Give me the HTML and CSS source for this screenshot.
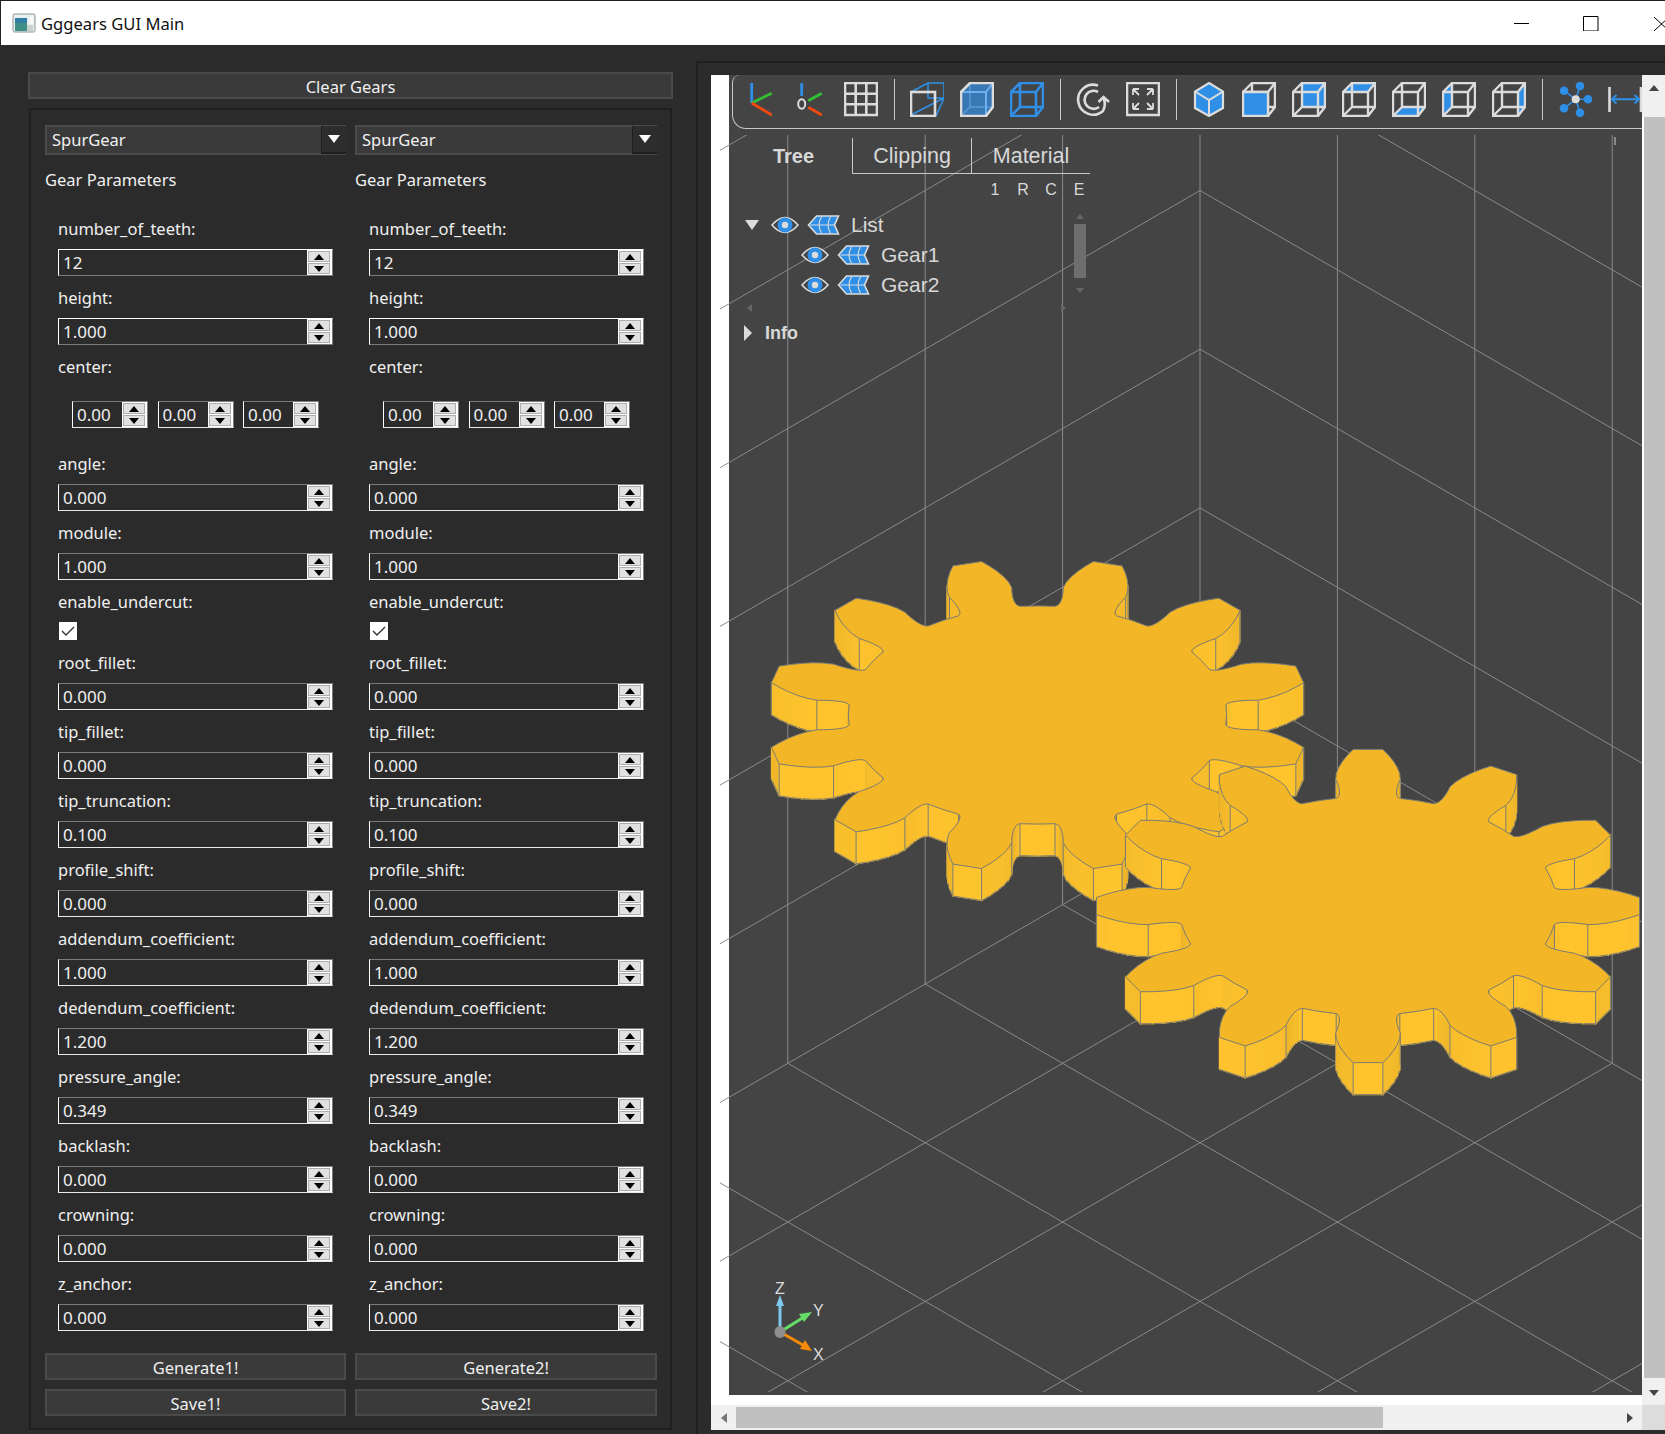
FILE: index.html
```html
<!DOCTYPE html>
<html lang="en">
<head>
  <meta charset="UTF-8">
  <title>Gggears GUI Main</title>
  <link rel="stylesheet" href="styles.css">
</head>
<body>
  <svg class="defs" width="0" height="0">
    <symbol id="cube" viewBox="0 0 34 35">
      <path class="wire" d="M1 10H26V34H1ZM10 1H33V25H10ZM1 10L10 1M26 10L33 1M26 34L33 25M1 34L10 25"/>
    </symbol>
    <symbol id="mesh" viewBox="0 0 32 20">
      <path d="M1 10L9 1H31L27 10L31 19H9Z" fill="#2f8fe6" stroke="#dcdcdc" stroke-width="1.6"/>
      <path d="M3 10H27M14 2Q9 10 14 18M23 2Q18 10 23 18" fill="none" stroke="#dcdcdc" stroke-width="1.1"/>
    </symbol>
    <symbol id="eye" viewBox="0 0 28 20">
      <path d="M1 10Q14 -5 27 10Q14 25 1 10Z" fill="#444" stroke="#dcdcdc" stroke-width="1.6"/>
      <circle cx="14" cy="10" r="7.5" fill="#2f8fe6"/>
      <circle cx="14" cy="10" r="3.2" fill="#dcdcdc"/>
    </symbol>
  </svg>

  <div class="titlebar">
    <svg class="app-icon" width="24" height="20" viewBox="0 0 24 20">
      <rect x="1" y="1" width="22" height="18" rx="1.5" fill="#e9eef1" stroke="#8d9296"/>
      <rect x="3" y="5" width="12" height="13" fill="#3f8f86"/>
      <rect x="3" y="5" width="12" height="5" fill="#2f7da0"/>
      <rect x="15" y="12" width="6" height="6" fill="#c9d2cc"/>
      <rect x="18" y="4" width="3" height="7" fill="#fff"/>
    </svg>
    <span class="app-title">Gggears GUI Main</span>
    <div class="win-btns">
      <svg width="151" height="16" viewBox="0 0 151 16">
        <path d="M0 7.5H15M69.5 .5H84V15H69.5ZM140 1L155 15M155 1L140 15" fill="none" stroke="#000"/>
      </svg>
    </div>
  </div>

  <div class="main">
    <div class="left">
      <button class="btn clear-btn">Clear Gears</button>
      <div class="group">

        <div class="gear-col">
          <div class="combo"><span>SpurGear</span><b class="combo-drop"></b></div>
          <div class="group-title">Gear Parameters</div>
          <div class="fields">
            <div class="field"><label>number_of_teeth:</label><div class="spin hi"><span>12</span><div class="spin-btns"><b></b><b class="dn"></b></div></div></div>
            <div class="field"><label>height:</label><div class="spin hi"><span>1.000</span><div class="spin-btns"><b></b><b class="dn"></b></div></div></div>
            <div class="field"><label>center:</label>
              <div class="triple">
                <div class="spin"><span>0.00</span><div class="spin-btns"><b></b><b class="dn"></b></div></div>
                <div class="spin"><span>0.00</span><div class="spin-btns"><b></b><b class="dn"></b></div></div>
                <div class="spin"><span>0.00</span><div class="spin-btns"><b></b><b class="dn"></b></div></div>
              </div>
            </div>
            <div class="field"><label>angle:</label><div class="spin"><span>0.000</span><div class="spin-btns"><b></b><b class="dn"></b></div></div></div>
            <div class="field"><label>module:</label><div class="spin"><span>1.000</span><div class="spin-btns"><b></b><b class="dn"></b></div></div></div>
            <div class="field"><label>enable_undercut:</label><div class="check"><svg width="18" height="18" viewBox="0 0 18 18"><path d="M3 9L7 13L15 5" fill="none" stroke="#333" stroke-width="1.4"/></svg></div></div>
            <div class="field"><label>root_fillet:</label><div class="spin"><span>0.000</span><div class="spin-btns"><b></b><b class="dn"></b></div></div></div>
            <div class="field"><label>tip_fillet:</label><div class="spin"><span>0.000</span><div class="spin-btns"><b></b><b class="dn"></b></div></div></div>
            <div class="field"><label>tip_truncation:</label><div class="spin"><span>0.100</span><div class="spin-btns"><b></b><b class="dn"></b></div></div></div>
            <div class="field"><label>profile_shift:</label><div class="spin"><span>0.000</span><div class="spin-btns"><b></b><b class="dn"></b></div></div></div>
            <div class="field"><label>addendum_coefficient:</label><div class="spin"><span>1.000</span><div class="spin-btns"><b></b><b class="dn"></b></div></div></div>
            <div class="field"><label>dedendum_coefficient:</label><div class="spin"><span>1.200</span><div class="spin-btns"><b></b><b class="dn"></b></div></div></div>
            <div class="field"><label>pressure_angle:</label><div class="spin"><span>0.349</span><div class="spin-btns"><b></b><b class="dn"></b></div></div></div>
            <div class="field"><label>backlash:</label><div class="spin"><span>0.000</span><div class="spin-btns"><b></b><b class="dn"></b></div></div></div>
            <div class="field"><label>crowning:</label><div class="spin"><span>0.000</span><div class="spin-btns"><b></b><b class="dn"></b></div></div></div>
            <div class="field"><label>z_anchor:</label><div class="spin"><span>0.000</span><div class="spin-btns"><b></b><b class="dn"></b></div></div></div>
          </div>
          <button class="btn gen-btn">Generate1!</button>
          <button class="btn save-btn">Save1!</button>
        </div>

        <div class="gear-col second">
          <div class="combo"><span>SpurGear</span><b class="combo-drop"></b></div>
          <div class="group-title">Gear Parameters</div>
          <div class="fields">
            <div class="field"><label>number_of_teeth:</label><div class="spin hi"><span>12</span><div class="spin-btns"><b></b><b class="dn"></b></div></div></div>
            <div class="field"><label>height:</label><div class="spin hi"><span>1.000</span><div class="spin-btns"><b></b><b class="dn"></b></div></div></div>
            <div class="field"><label>center:</label>
              <div class="triple">
                <div class="spin"><span>0.00</span><div class="spin-btns"><b></b><b class="dn"></b></div></div>
                <div class="spin"><span>0.00</span><div class="spin-btns"><b></b><b class="dn"></b></div></div>
                <div class="spin"><span>0.00</span><div class="spin-btns"><b></b><b class="dn"></b></div></div>
              </div>
            </div>
            <div class="field"><label>angle:</label><div class="spin"><span>0.000</span><div class="spin-btns"><b></b><b class="dn"></b></div></div></div>
            <div class="field"><label>module:</label><div class="spin"><span>1.000</span><div class="spin-btns"><b></b><b class="dn"></b></div></div></div>
            <div class="field"><label>enable_undercut:</label><div class="check"><svg width="18" height="18" viewBox="0 0 18 18"><path d="M3 9L7 13L15 5" fill="none" stroke="#333" stroke-width="1.4"/></svg></div></div>
            <div class="field"><label>root_fillet:</label><div class="spin"><span>0.000</span><div class="spin-btns"><b></b><b class="dn"></b></div></div></div>
            <div class="field"><label>tip_fillet:</label><div class="spin"><span>0.000</span><div class="spin-btns"><b></b><b class="dn"></b></div></div></div>
            <div class="field"><label>tip_truncation:</label><div class="spin"><span>0.100</span><div class="spin-btns"><b></b><b class="dn"></b></div></div></div>
            <div class="field"><label>profile_shift:</label><div class="spin"><span>0.000</span><div class="spin-btns"><b></b><b class="dn"></b></div></div></div>
            <div class="field"><label>addendum_coefficient:</label><div class="spin"><span>1.000</span><div class="spin-btns"><b></b><b class="dn"></b></div></div></div>
            <div class="field"><label>dedendum_coefficient:</label><div class="spin"><span>1.200</span><div class="spin-btns"><b></b><b class="dn"></b></div></div></div>
            <div class="field"><label>pressure_angle:</label><div class="spin"><span>0.349</span><div class="spin-btns"><b></b><b class="dn"></b></div></div></div>
            <div class="field"><label>backlash:</label><div class="spin"><span>0.000</span><div class="spin-btns"><b></b><b class="dn"></b></div></div></div>
            <div class="field"><label>crowning:</label><div class="spin"><span>0.000</span><div class="spin-btns"><b></b><b class="dn"></b></div></div></div>
            <div class="field"><label>z_anchor:</label><div class="spin"><span>0.000</span><div class="spin-btns"><b></b><b class="dn"></b></div></div></div>
          </div>
          <button class="btn gen-btn">Generate2!</button>
          <button class="btn save-btn">Save2!</button>
        </div>

      </div>
    </div>

    <div class="right">
      <div class="viewer">
        <div class="canvas">
          <div class="overlay">
            <div class="toolbar">
              <svg class="tool" viewBox="0 0 34 35"><path d="M7.7 1V21" stroke="#2f8fe6"/><path d="M7.7 21L27.7 11.3" stroke="#33c133"/><path d="M7.7 21L27.7 33" stroke="#f04a10"/></svg>
              <svg class="tool" viewBox="0 0 34 35"><path d="M7.7 1V14" stroke="#2f8fe6"/><ellipse cx="7.7" cy="22" rx="3.5" ry="4.8" fill="none" stroke="#dcdcdc" stroke-width="2"/><path d="M14.3 18.7L27.7 11.3" stroke="#33c133"/><path d="M14.3 25.3L27.7 33" stroke="#f04a10"/></svg>
              <svg class="tool" viewBox="0 0 34 35"><path class="line" d="M1 1H33V33H1ZM11.7 1V33M22.3 1V33M1 11.7H33M1 22.3H33"/></svg>
              <i class="tool-sep"></i>
              <svg class="tool" viewBox="0 0 34 35"><path d="M1 10L18 1H34V16L26 34M1 33L34 16M18 1V16H34" fill="none" stroke="#2f8fe6" stroke-width="1.6"/><rect class="line" x="1" y="10" width="24" height="24" stroke-width="3"/></svg>
              <svg class="tool" viewBox="0 0 34 35"><path d="M1 10L10 1H33V25L26 34H1Z" fill="#3a78b5"/><path d="M10 1V25H33M1 34L10 25" fill="none" stroke="#5a9ad6" stroke-width="1.4"/><path d="M1 10H26V34M26 10L33 1" fill="none" stroke="#6db0ee" stroke-width="2"/><path class="line" d="M1 10L10 1H33V25L26 34H1Z"/></svg>
              <svg class="tool" viewBox="0 0 34 35"><path d="M1 10L10 1H33V25L26 34H1ZM1 10H26V34M26 10L33 1M10 1V25H33M1 34L10 25" fill="none" stroke="#2f8fe6" stroke-width="2.6"/></svg>
              <i class="tool-sep"></i>
              <svg class="tool" viewBox="0 0 34 35"><path class="line" d="M22 3.5A15 15 0 1 0 27 29A15 15 0 0 0 27.5 16M22 10A9 9 0 1 0 23 25M22.5 20L27.5 15L33 20"/></svg>
              <svg class="tool" viewBox="0 0 34 35"><path class="line" d="M1 1H33V33H1Z"/><path class="line thin" d="M7 7L13 13M7 7H13M7 7V13M27 7L21 13M27 7H21M27 7V13M7 27L13 21M7 27H13M7 27V21M27 27L21 21M27 27H21M27 27V21"/></svg>
              <i class="tool-sep"></i>
              <svg class="tool" viewBox="0 0 34 35"><path d="M17 1L31 9.5V26L17 34L3 26V9.5Z" fill="#2f8fe6" stroke="#dcdcdc" stroke-width="2.2"/><path d="M3 9.5L17 18L31 9.5M17 18V34" fill="none" stroke="#dcdcdc" stroke-width="2"/></svg>
              <svg class="tool" viewBox="0 0 34 35"><use href="#cube"/><path class="face solid" d="M1 10H26V34H1Z"/></svg>
              <svg class="tool" viewBox="0 0 34 35"><path class="face" d="M10 1H33V25H10Z"/><use href="#cube"/></svg>
              <svg class="tool" viewBox="0 0 34 35"><path class="face" d="M1 10L10 1H33L26 10Z"/><use href="#cube"/></svg>
              <svg class="tool" viewBox="0 0 34 35"><path class="face" d="M1 34L10 25H33L26 34Z"/><use href="#cube"/></svg>
              <svg class="tool" viewBox="0 0 34 35"><path class="face" d="M1 10L10 1V25L1 34Z"/><use href="#cube"/></svg>
              <svg class="tool" viewBox="0 0 34 35"><path class="face" d="M26 10L33 1V25L26 34Z"/><use href="#cube"/></svg>
              <i class="tool-sep"></i>
              <svg class="tool" viewBox="0 0 34 35"><path d="M17.7 17.3L22 4M17.7 17.3L6 8.7M17.7 17.3H32M17.7 17.3L6 26.3M17.7 17.3L22 30.7" stroke="#2f8fe6" stroke-width="1.6" fill="none"/><g fill="#2f8fe6"><circle cx="22" cy="4" r="4.3"/><circle cx="6" cy="8.7" r="4.3"/><circle cx="30" cy="17.3" r="4.3"/><circle cx="6" cy="26.3" r="4.3"/><circle cx="22" cy="30.7" r="4.3"/></g><circle cx="17.7" cy="17.3" r="4" fill="#dcdcdc"/></svg>
              <svg class="tool" viewBox="0 0 34 35"><path class="line" d="M1.5 5V30M33 5V30"/><path d="M4 17.3H31M8.5 13L4 17.3L8.5 21.6M26.5 13L31 17.3L26.5 21.6" fill="none" stroke="#2f8fe6" stroke-width="2"/></svg>
            </div>

            <div class="tabs">
              <span class="tab active">Tree</span>
              <span class="tab">Clipping</span>
              <span class="tab">Material</span>
            </div>
            <div class="tree-head"><span>1</span><span>R</span><span>C</span><span>E</span></div>

            <div class="tree">
              <div class="tree-row"><i class="arrow-down"></i><svg class="eye"><use href="#eye"/></svg><svg class="mesh"><use href="#mesh"/></svg><span>List</span></div>
              <div class="tree-row child"><svg class="eye"><use href="#eye"/></svg><svg class="mesh"><use href="#mesh"/></svg><span>Gear1</span></div>
              <div class="tree-row child"><svg class="eye"><use href="#eye"/></svg><svg class="mesh"><use href="#mesh"/></svg><span>Gear2</span></div>
              <i class="tree-up"></i><i class="tree-thumb"></i><i class="tree-dn"></i><i class="tree-lt"></i><i class="tree-rt"></i>
            </div>
            <div class="info"><i class="arrow-right"></i><span>Info</span></div>
          </div>
        </div>

        <div class="vbar">
          <div class="vbar-btn"><i class="tri-up"></i></div>
          <div class="vbar-thumb"></div>
          <div class="vbar-btn low"><i class="tri-dn"></i></div>
        </div>
        <div class="hbar">
          <div class="hbar-btn"><i class="tri-lt"></i></div>
          <div class="hbar-thumb"></div>
          <div class="hbar-btn end"><i class="tri-rt"></i></div>
        </div>
        <div class="corner"></div>

        <svg class="scene" id="scene" viewBox="711 75 931 1320" width="931" height="1320">
          <defs><clipPath id="view"><rect x="720" y="135" width="922" height="1257"/></clipPath></defs>
          <g id="grid" clip-path="url(#view)" fill="none" stroke="#8a8a8a" stroke-width="1"></g>
          <rect x="1614" y="137" width="2" height="8" fill="#8a8a8a"/>
          <g id="gears" clip-path="url(#view)"></g>
          <g class="axis">
            <path d="M780 1332V1304" stroke="#7ec8f0" stroke-width="3"/>
            <path d="M780 1295L776 1306H784Z" fill="#7ec8f0"/>
            <path d="M780 1332L804 1317" stroke="#66dd66" stroke-width="3"/>
            <path d="M812 1312L799 1314L804 1322Z" fill="#66dd66"/>
            <path d="M780 1332L803 1345" stroke="#f58a0a" stroke-width="3"/>
            <path d="M812 1351L800 1349L805 1340Z" fill="#f58a0a"/>
            <ellipse cx="780" cy="1332" rx="5.5" ry="6" fill="#8e8e8e"/>
            <text x="775" y="1294">Z</text>
            <text x="813" y="1316">Y</text>
            <text x="813" y="1360">X</text>
          </g>
        </svg>
      </div>
    </div>
  </div>
  <script src="scene.js"></script>
</body>
</html>
```

FILE: styles.css
```css
* { box-sizing: border-box; }
body { margin: 0; width: 1665px; height: 1434px; overflow: hidden; background: #222; font-family: "Noto Sans", "Open Sans", sans-serif; font-size: 16.5px; color: #f0f0f0; }
.defs { position: absolute; }

.titlebar { height: 44px; margin: 1px 0 0 1px; background: white; display: flex; align-items: center; color: #111; font-size: 16.6px; }
.app-icon { margin-left: 11px; margin-right: 5px; }
.win-btns { margin-left: auto; margin-right: 0; padding-top: 1px; height: 16px; overflow: hidden; width: 151px; }
.win-btns svg { display: block; overflow: hidden; }

.main { height: 1389px; display: flex; background: #2b2b2b; }
.left { width: 696px; padding: 27px 0 0 28px; }

.btn { display: block; height: 27px; padding: 0; background: #3a3a3a; border: 2px solid #4a4a4a; color: #f0f0f0; font: inherit; line-height: 25px; }
.clear-btn { width: 645px; }

.group { width: 643px; height: 1322px; margin: 9px 0 0 1px; padding: 15px 0 0 14px; border: 2px solid #1f1f1f; display: grid; grid-template-columns: 301px 302px; column-gap: 9px; align-content: start; }

.combo { height: 30px; padding-left: 5px; background: #3a3a3a; border: 2px solid #4a4a4a; display: flex; align-items: center; justify-content: space-between; line-height: 28px; }
.combo-drop { width: 25px; height: 28px; margin-right: -2px; background: #2d2d2d; border-left: 1px solid #1f1f1f; border-bottom: 2px solid #1f1f1f; display: flex; align-items: center; justify-content: center; }
.combo-drop::before { content: ""; border: 6px solid transparent; border-top: 8px solid white; border-bottom: 0; }

.group-title { height: 24px; margin: 13px 0 16px; line-height: 24px; }
.fields { padding-left: 13px; }
.second .fields { padding-left: 14px; }

.field { margin-bottom: 1px; }
.field label { display: block; height: 41px; line-height: 41px; }

.spin { width: 275px; height: 27px; font-size: 17px; background: #2b2b2b; border: 1px solid #7a7a7a; border-left-color: white; border-bottom-color: #e8e8e8; display: flex; justify-content: space-between; }
.spin.hi { border-top-color: white; border-bottom-color: #7a7a7a; }
.spin span { padding-left: 4px; line-height: 26px; }
.spin-btns { width: 25px; padding: 1px 2px 1px 1px; background: white; display: flex; flex-direction: column; gap: 1px; }
.spin-btns b { flex: 1; background: #e1e1e1; border: 1px solid #adadad; display: flex; align-items: center; justify-content: center; }
.spin-btns b::before { content: ""; border: 5px solid transparent; border-bottom: 6px solid black; border-top: 0; }
.spin-btns b.dn::before { border-top: 6px solid black; border-bottom: 0; }

.triple { display: flex; gap: 9.5px; margin: 14px 0 15px 14px; }
.triple .spin { width: 76px; }

.check { width: 18px; height: 18px; margin: 0 0 2px 1px; background: white; }
.check svg { display: block; }

.gen-btn { width: 100%; margin-top: 22px; }
.save-btn { width: 100%; margin-top: 9px; }

.right { flex: 1; margin-top: 16px; padding: 12px 0 0 13px; border-left: 2px solid #1f1f1f; border-top: 2px solid #1f1f1f; }
.viewer { position: relative; width: 954px; height: 1355px; background: white; display: grid; grid-template-columns: 18px 913px 23px; grid-template-rows: 1330px 25px; }
.canvas { grid-column: 2; grid-row: 1; height: 1320px; background: #444; overflow: hidden; }
.scene { position: absolute; left: 0; top: 0; z-index: 1; }
.axis text { font: 16px "Liberation Sans", sans-serif; fill: #ddd; }
.overlay { position: relative; z-index: 2; height: 100%; font-family: "Liberation Sans", sans-serif; font-size: 21px; color: #d8d8d8; }

.toolbar { width: 910px; height: 54px; margin-left: 3px; padding: 7px 0 0 11px; border-left: 1px solid #c8c8c8; border-bottom: 1px solid #c8c8c8; border-radius: 8px 0 0 14px; display: flex; gap: 16px; overflow: hidden; }
.tool { flex: none; width: 34px; height: 35px; stroke-width: 2.8; overflow: hidden; }
.tool .line { fill: none; stroke: #dcdcdc; stroke-width: 2.6; }
.tool .line.thin { stroke-width: 1.8; }
.tool .face { fill: #2f8fe6; }
.tool .face.solid { stroke: #dcdcdc; stroke-width: 2.4; }
.wire { fill: none; stroke: #dcdcdc; stroke-width: 2.4; }
.tool-sep { flex: none; width: 1px; height: 41px; margin: -3px -1px 0 0; background: #c8c8c8; }

.tabs { display: flex; height: 36px; margin: 9px 0 0 6px; font-size: 21.5px; }
.tab { width: 119px; padding-top: 4px; text-align: center; line-height: 28px; border-left: 1px solid #c8c8c8; border-bottom: 1px solid #c8c8c8; }
.tab.active { width: 117px; border: 0; font-weight: bold; font-size: 20px; }
.tree-head { display: flex; height: 16px; margin: 7px 0 0 252px; font-size: 16px; line-height: 17px; }
.tree-head span { width: 28px; text-align: center; }

.tree { position: relative; margin-top: 13px; height: 90px; }
.tree-row { height: 30px; display: flex; align-items: center; padding-left: 16px; }
.tree-row.child { padding-left: 72px; }
.arrow-down { border: 7px solid transparent; border-top: 10px solid #dcdcdc; border-bottom: 0; margin-right: 12px; }
.arrow-right { border: 8px solid transparent; border-left: 8px solid #dcdcdc; border-right: 0; margin-right: 13px; }
.eye { width: 28px; height: 20px; margin-right: 8px; }
.mesh { width: 33px; height: 20px; margin-right: 11px; }
.tree-thumb { position: absolute; left: 345px; top: 14px; width: 12px; height: 54px; background: #6e6e6e; }
.tree-up { position: absolute; left: 347px; top: 4px; border: 4px solid transparent; border-bottom: 5px solid #666; border-top: 0; }
.tree-dn { position: absolute; left: 347px; top: 78px; border: 4px solid transparent; border-top: 5px solid #666; border-bottom: 0; }
.tree-lt { position: absolute; left: 18px; top: 94px; border: 4px solid transparent; border-right: 5px solid #666; border-left: 0; }
.tree-rt { position: absolute; left: 332px; top: 94px; border: 4px solid transparent; border-left: 5px solid #666; border-right: 0; }
.info { display: flex; align-items: center; height: 26px; margin-top: 20px; padding-left: 15px; font-weight: bold; font-size: 18px; }

.vbar { grid-column: 3; grid-row: 1; background: white; display: flex; flex-direction: column; }
.vbar-btn { height: 42px; background: #f0f0f0; display: flex; justify-content: center; padding-top: 10px; }
.vbar-btn.low { height: 27px; padding-top: 12px; }
.vbar-thumb { height: 1261px; margin-left: 2px; background: #c0c0c0; }
.tri-up { border: 5.5px solid transparent; border-bottom: 6px solid #444; border-top: 0; height: 0; }
.tri-dn { border: 5.5px solid transparent; border-top: 6px solid #444; border-bottom: 0; height: 0; }

.hbar { grid-column: 1 / 3; grid-row: 2; background: #f0f0f0; display: flex; align-items: center; }
.hbar-btn { width: 25px; height: 25px; display: flex; align-items: center; justify-content: center; }
.hbar-btn.end { width: 24px; margin-left: auto; }
.hbar-thumb { width: 647px; height: 21px; background: #c0c0c0; }
.tri-lt { border: 5.5px solid transparent; border-right: 6px solid #777; border-left: 0; }
.tri-rt { border: 5.5px solid transparent; border-left: 6px solid #444; border-right: 0; }
.corner { grid-column: 3; grid-row: 2; background: #dcdcdc; }
```

FILE: scene.js
```js
// isometric grid and the two extruded gears of the 3D view
const NS = "http://www.w3.org/2000/svg";
const SLOPE = 0.5775;
const CELL_Y = 158.7;
const CELL_X = CELL_Y / 2 / SLOPE;
const MID_X = 1200, LEFT = 720, RIGHT = 1642;

function el(parent, name, attrs) {
  const n = document.createElementNS(NS, name);
  for (const k in attrs) n.setAttribute(k, attrs[k]);
  parent.appendChild(n);
  return n;
}

function drawGrid() {
  const g = document.getElementById("grid");
  const line = (x1, y1, x2, y2) => el(g, "line", { x1, y1, x2, y2 });
  const floor = 190.5 + 4 * CELL_Y;

  // back walls
  for (let k = -2; k <= 3; k++) {
    const y = 190.5 + k * CELL_Y;
    line(MID_X, y, LEFT, y + (MID_X - LEFT) * SLOPE);
    line(MID_X, y, RIGHT, y + (RIGHT - MID_X) * SLOPE);
  }
  for (let j = -3; j <= 3; j++) {
    line(MID_X + j * CELL_X, 135, MID_X + j * CELL_X, floor + Math.abs(j) * CELL_Y / 2);
  }

  // floor
  for (let n = 0; n <= 6; n++) {
    const c = floor + n * CELL_Y;
    let x = MID_X - n * CELL_X, y = floor + n * CELL_Y / 2;
    if (x < LEFT) { x = LEFT; y = c - (MID_X - LEFT) * SLOPE; }
    line(x, y, RIGHT, c + (RIGHT - MID_X) * SLOPE);
    x = MID_X + n * CELL_X; y = floor + n * CELL_Y / 2;
    if (x > RIGHT) { x = RIGHT; y = c - (RIGHT - MID_X) * SLOPE; }
    line(x, y, LEFT, c + (MID_X - LEFT) * SLOPE);
  }
}

// half a tooth, from the slot centre up to the tip: [radius, angle from tooth axis, edge mark]
function halfTooth() {
  const base = 5.638, tip = 6.9;
  const inv = (r) => { const a = Math.acos(base / r); return Math.tan(a) - a; };
  const pts = [[4.8, 0.2618, false], [4.8, 0.169, true]];
  // fillet from the root up to the base circle
  for (let i = 1; i < 8; i++) {
    const t = i / 8, u = 1 - t;
    pts.push([u * u * 4.8 + 2 * u * t * 4.88 + t * t * base, u * u * 0.169 + 2 * u * t * 0.13 + t * t * 0.1458, false]);
  }
  for (let i = 0; i <= 5; i++) {
    const r = base + (tip - base) * i / 5;
    pts.push([r, 0.1458 - inv(r), i === 0 || i === 5]);
  }
  return pts;
}

function drawGear(g, cx, cy, phase) {
  const SCALE = 39.4, SQUASH = 0.577, DEPTH = 32;
  const half = halfTooth();
  const pts = [];
  for (let t = 0; t < 12; t++) {
    const axis = phase + t * Math.PI / 6;
    half.forEach((p) => pts.push({ r: p[0], a: axis - p[1], mark: p[2] }));
    for (let i = half.length - 1; i > 0; i--) pts.push({ r: half[i][0], a: axis + half[i][1], mark: half[i][2] });
  }
  pts.forEach((p) => {
    p.wx = p.r * Math.cos(p.a);
    p.wy = p.r * Math.sin(p.a);
    p.x = cx + SCALE * p.wx;
    p.y = cy + SCALE * SQUASH * p.wy;
  });

  const items = [];
  const n = pts.length;
  const facing = pts.map((p, i) => pts[(i + 1) % n].x - p.x < -0.001);
  pts.forEach((p, i) => {
    const q = pts[(i + 1) % n];
    if (facing[i]) {
      const dx = q.wx - p.wx, dy = q.wy - p.wy;
      const t = Math.sqrt(Math.max(0, -dx / Math.hypot(dx, dy)));
      const c = `rgb(${Math.round(225 + 30 * t)},${Math.round(170 + 26 * t)},${Math.round(40 + 5 * t)})`;
      items.push({ key: (p.y + q.y) / 2, draw: () => {
        el(g, "polygon", { points: `${p.x},${p.y} ${q.x},${q.y} ${q.x},${q.y + DEPTH} ${p.x},${p.y + DEPTH}`, fill: c, stroke: c, "stroke-width": 1.2 });
        el(g, "line", { x1: p.x, y1: p.y + DEPTH, x2: q.x, y2: q.y + DEPTH, stroke: "#7c7c74" });
      } });
    }
    const prev = facing[(i + n - 1) % n];
    if ((facing[i] || prev) && (p.mark || facing[i] !== prev)) {
      items.push({ key: Math.max(p.y, q.y) + 3, draw: () => {
        el(g, "line", { x1: p.x, y1: p.y, x2: p.x, y2: p.y + DEPTH, stroke: "#7c7c74" });
      } });
    }
  });
  items.sort((a, b) => a.key - b.key).forEach((it) => it.draw());

  const d = pts.map((p, i) => (i ? "L" : "M") + p.x.toFixed(1) + " " + p.y.toFixed(1)).join("") + "Z";
  el(g, "path", { d, fill: "#f2b626", stroke: "#7c7c74", "stroke-width": 1 });
}

drawGrid();
const gears = document.getElementById("gears");
drawGear(gears, 1037.5, 715, Math.PI / 12);
drawGear(gears, 1368, 906, 0);
```
